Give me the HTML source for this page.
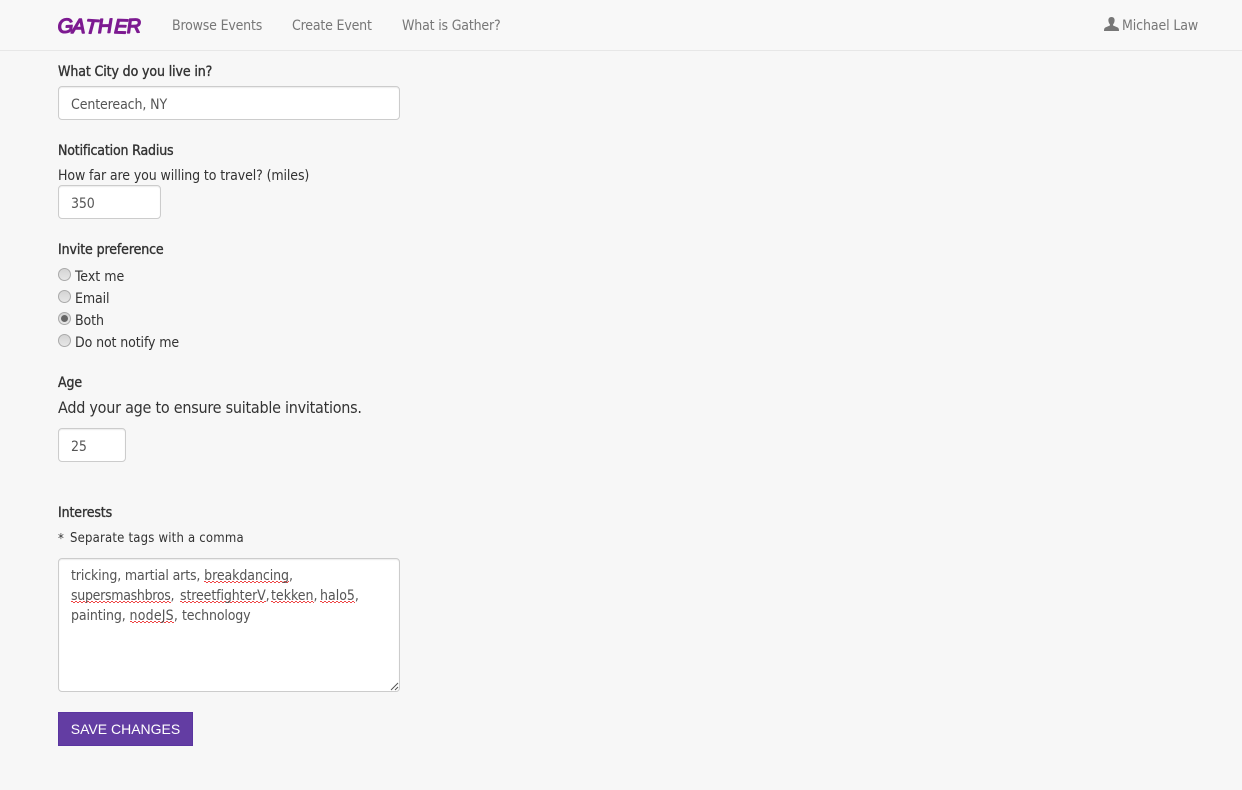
<!DOCTYPE html>
<html>
<head>
<meta charset="utf-8">
<style>
html,body{margin:0;padding:0;width:1242px;height:790px;overflow:hidden;background:#f7f7f7;}
body{font-family:"DejaVu Sans Condensed","DejaVu Sans",sans-serif;font-size:14px;color:#333;position:relative;letter-spacing:-.11px;}
.t{position:absolute;white-space:nowrap;line-height:20px;}
.nav{position:absolute;left:0;top:0;width:1242px;height:50px;background:#f8f8f8;border-bottom:1px solid #e7e7e7;}
.n{color:#777;top:16px;letter-spacing:-.18px;}
.l{left:58px;color:#333;-webkit-text-stroke:.35px #333;}
.box{position:absolute;box-sizing:border-box;background:#fff;border:1px solid #ccc;border-radius:4px;box-shadow:inset 0 1px 1px rgba(0,0,0,.075);}
.v{color:#555;}
.r{position:absolute;left:58px;width:13px;height:13px;box-sizing:border-box;border:1px solid #aaa;border-radius:50%;background:linear-gradient(#d4d4d4,#e6e6e6);}
.sp{display:inline-block;height:20px;background-image:repeating-linear-gradient(90deg,#e44 0 2px,transparent 2px 4px),repeating-linear-gradient(90deg,transparent 0 2px,#e44 2px 4px);background-size:100% 1px,100% 1px;background-repeat:no-repeat;background-position:0 15px,0 16px;}
.btn{position:absolute;left:58px;top:712px;width:135px;height:34px;box-sizing:border-box;background:#633da3;border:1px solid #5a35a0;color:#fff;font-family:"Liberation Sans",sans-serif;font-size:14px;line-height:32px;text-align:center;letter-spacing:0;}
</style>
</head>
<body>
<div class="nav"></div>
<svg style="position:absolute;left:50px;top:8px;letter-spacing:0" width="100" height="36">
<text x="8 22 35 48 64 77" y="25" rotate="-3 0 4 -2 2 -3" font-family="Liberation Sans, sans-serif" font-size="20" font-style="italic" fill="#7d1a91" stroke="#7d1a91" stroke-width="1.4" stroke-linejoin="round">GATHER</text>
</svg>
<div class="t n" style="left:172px">Browse Events</div>
<div class="t n" style="left:292px">Create Event</div>
<div class="t n" style="left:402px">What is Gather?</div>
<svg style="position:absolute;left:1104px;top:17px" width="15" height="14" viewBox="0 0 15 14"><path fill="#777" d="M7.500 0C5.300 0 4.200 1.600 4.400 3.600c.1 1.500.7 2.900 1.500 3.700v1.200L1.500 10.400C.5 10.900 0 11.700 0 14h15c0-2.300-.5-3.100-1.500-3.600L9.100 8.500V7.300c.8-.8 1.400-2.200 1.500-3.700C10.800 1.600 9.700 0 7.500 0z"/></svg>
<div class="t n" style="left:1122px;letter-spacing:-.11px">Michael Law</div>

<div class="t l" style="top:62px">What City do you live in?</div>
<div class="box" style="left:58px;top:86px;width:342px;height:34px"></div>
<div class="t v" style="left:71px;top:95px">Centereach, NY</div>

<div class="t l" style="top:141px;letter-spacing:-.16px">Notification Radius</div>
<div class="t" style="left:58px;top:166px">How far are you willing to travel? (miles)</div>
<div class="box" style="left:58px;top:185px;width:103px;height:34px"></div>
<div class="t v" style="left:71px;top:194px">350</div>

<div class="t l" style="top:240px">Invite preference</div>
<div class="r" style="top:268px"></div>
<div class="t" style="left:75px;top:267px;letter-spacing:0">Text me</div>
<div class="r" style="top:290px"></div>
<div class="t" style="left:75px;top:289px">Email</div>
<div class="r" style="top:312px"><div style="position:absolute;left:2px;top:2px;width:7px;height:7px;border-radius:50%;background:#666"></div></div>
<div class="t" style="left:75px;top:311px">Both</div>
<div class="r" style="top:334px"></div>
<div class="t" style="left:75px;top:333px">Do not notify me</div>

<div class="t l" style="top:373px">Age</div>
<div class="t" style="left:58px;top:398px;font-size:16px;letter-spacing:-.25px">Add your age to ensure suitable invitations.</div>
<div class="box" style="left:58px;top:428px;width:68px;height:34px"></div>
<div class="t v" style="left:71px;top:437px">25</div>

<div class="t l" style="top:503px">Interests</div>
<div class="t" style="left:58px;top:530px;font-size:13px">*</div>
<div class="t" style="left:70px;top:529px;font-size:13px;letter-spacing:.2px">Separate tags with a comma</div>
<div class="box" style="left:58px;top:558px;width:342px;height:134px"></div>
<div class="t v" style="left:71px;top:566px;letter-spacing:-.14px">tricking, martial arts, <span class="sp" style="letter-spacing:-.08px">breakdancing</span>,</div>
<div class="t v" style="left:71px;top:586px;letter-spacing:-.3px"><span class="sp">supersmashbros</span>,</div>
<div class="t v" style="left:180px;top:586px;letter-spacing:-.11px"><span class="sp">streetfighterV</span>,</div>
<div class="t v" style="left:271px;top:586px;letter-spacing:0"><span class="sp">tekken</span>,</div>
<div class="t v" style="left:320px;top:586px;letter-spacing:0"><span class="sp">halo5</span>,</div>
<div class="t v" style="left:71px;top:606px">painting, <span class="sp" style="letter-spacing:.2px">nodeJS</span>,</div>
<div class="t v" style="left:182px;top:606px;letter-spacing:-.15px">technology</div>
<svg style="position:absolute;left:390px;top:682px" width="9" height="9"><path d="M1 8L8 1M5 8L8 5" stroke="#555" stroke-width="1"/></svg>

<div class="btn">SAVE CHANGES</div>
</body>
</html>
